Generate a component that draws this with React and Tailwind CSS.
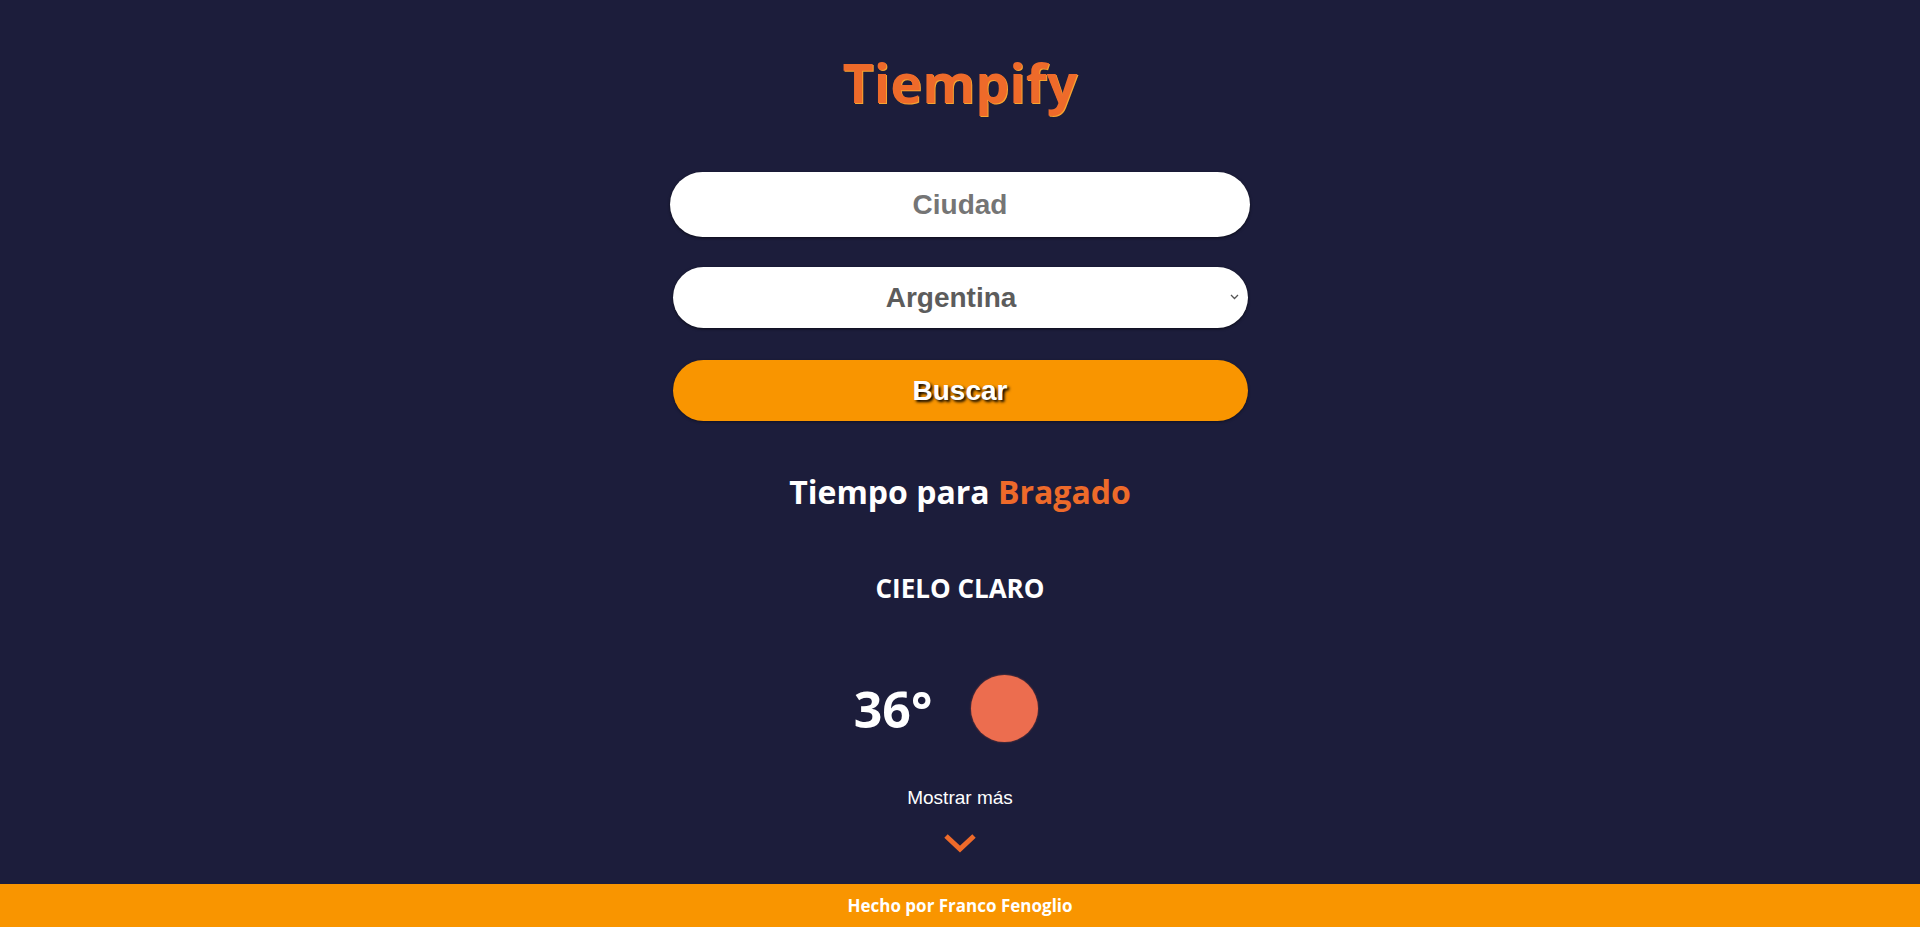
import { useState } from "react";

const App = () => {
  const [city, setCity] = useState("");
  const [country, setCountry] = useState("AR");

  return (
    <div className="min-h-screen flex flex-col bg-[#1c1d3b] font-['Open_Sans',sans-serif]">
      <main className="flex-1 flex flex-col items-center">
        <h1 className="mt-[42px] text-[54px] leading-[80px] font-bold text-[#ee6a2a] [text-shadow:1px_1px_0_#f6a530]">
          Tiempify
        </h1>

        <form
          onSubmit={(e) => e.preventDefault()}
          className="mt-[50px] w-[580px] flex flex-col items-center font-['Liberation_Sans',Arial,sans-serif]"
        >
          <input
            type="text"
            placeholder="Ciudad"
            value={city}
            onChange={(e) => setCity(e.target.value)}
            className="w-[580px] h-[65px] rounded-full bg-white text-center text-[28px] font-bold text-[#555] placeholder:text-[#757575] outline-none shadow-[0_1px_3px_rgba(0,0,0,0.6)]"
          />

          <div className="relative mt-[30px] w-[575px]">
            <select
              value={country}
              onChange={(e) => setCountry(e.target.value)}
              className="w-full h-[61px] appearance-none rounded-full bg-white pr-[18px] text-[28px] font-bold text-[#5c5c5c] [text-align-last:center] outline-none shadow-[0_1px_3px_rgba(0,0,0,0.6)]"
            >
              <option value="AR">Argentina</option>
              <option value="UY">Uruguay</option>
              <option value="CL">Chile</option>
            </select>
            <svg
              className="absolute right-[9px] top-[27px] w-[9px] h-[6px] pointer-events-none"
              viewBox="0 0 9 6"
              fill="none"
              stroke="#555"
              strokeWidth="1.3"
            >
              <path d="M1 1l3.5 3.5L8 1" />
            </svg>
          </div>

          <button
            type="submit"
            className="mt-[32px] w-[575px] h-[61px] rounded-full bg-[#f99500] text-white text-[28px] font-bold [text-shadow:2px_2px_3px_#000] shadow-[0_1px_3px_rgba(0,0,0,0.4)]"
          >
            Buscar
          </button>
        </form>

        <h2 className="mt-[49px] text-[32px] leading-[44px] font-bold text-white">
          Tiempo para <span className="text-[#ee6a2a]">Bragado</span>
        </h2>

        <p className="mt-[57px] text-[26px] leading-[34px] font-bold text-white">
          CIELO CLARO
        </p>

        <div className="mt-[70px] flex items-center gap-[11px]">
          <span className="text-[50px] leading-[66px] font-bold text-white">36°</span>
          <div className="w-[123px] h-[67px] flex items-center justify-center">
            <div className="w-[67px] h-[67px] rounded-full bg-[#ec6d4f] shadow-[0_0_2px_#a84a36]" />
          </div>
        </div>

        <button className="mt-[44px] text-[19px] leading-[24px] text-white font-['Liberation_Sans',Arial,sans-serif]">
          Mostrar más
        </button>

        <svg className="mt-[22px] w-[34px] h-[22px]" viewBox="0 0 34 22" fill="none" stroke="#ee6a2a" strokeWidth="5">
          <path d="M3 4l14 13L31 4" />
        </svg>
      </main>

      <footer className="h-[43px] bg-[#f99500] flex items-center justify-center text-white text-[17px] font-bold">
        Hecho por Franco Fenoglio
      </footer>
    </div>
  );
};

export default App;
